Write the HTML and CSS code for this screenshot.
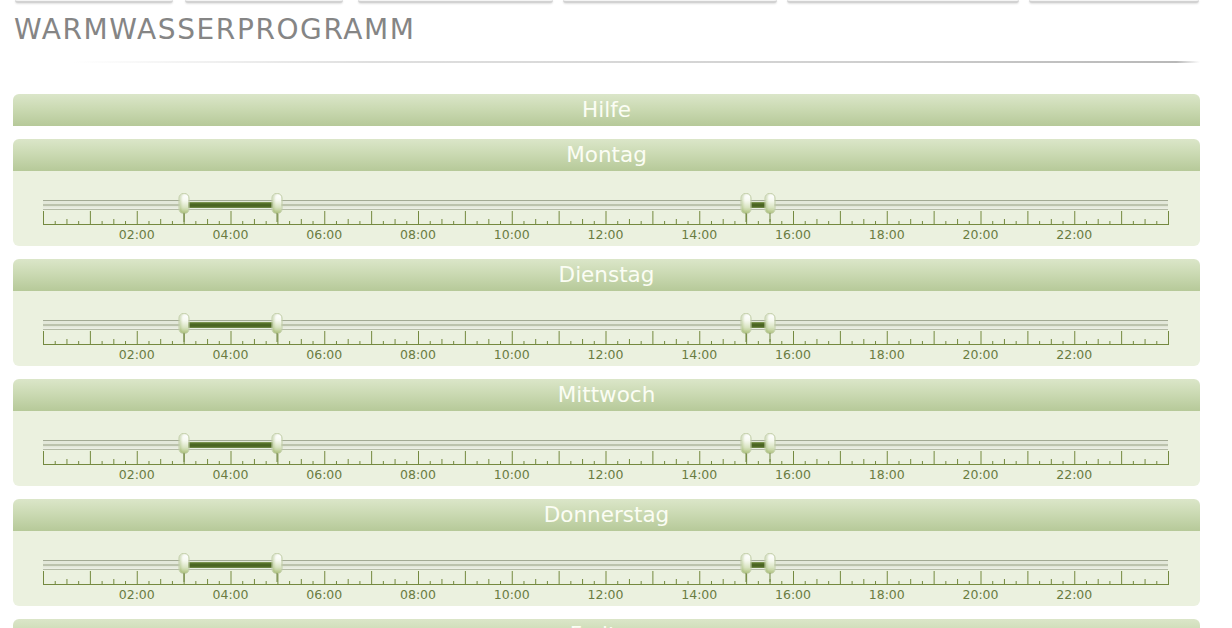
FILE: index.html
```html
<!DOCTYPE html>
<html lang="de">
<head>
<meta charset="utf-8">
<title>Warmwasserprogramm</title>
<link rel="stylesheet" href="styles.css">
</head>
<body>
<svg class="defs" width="0" height="0" aria-hidden="true">
  <symbol id="ruler" viewBox="-0.04267 0 96.0853 14" preserveAspectRatio="none">
    <path vector-effect="non-scaling-stroke" d="M0 13.5H96M0 0v14m1 -4v4m1 -6v6m1 -4v4m1 -14v14m1 -4v4m1 -6v6m1 -4v4m1 -14v14m1 -4v4m1 -6v6m1 -4v4m1 -14v14m1 -4v4m1 -6v6m1 -4v4m1 -14v14m1 -4v4m1 -6v6m1 -4v4m1 -14v14m1 -4v4m1 -6v6m1 -4v4m1 -14v14m1 -4v4m1 -6v6m1 -4v4m1 -14v14m1 -4v4m1 -6v6m1 -4v4m1 -14v14m1 -4v4m1 -6v6m1 -4v4m1 -14v14m1 -4v4m1 -6v6m1 -4v4m1 -14v14m1 -4v4m1 -6v6m1 -4v4m1 -14v14m1 -4v4m1 -6v6m1 -4v4m1 -14v14m1 -4v4m1 -6v6m1 -4v4m1 -14v14m1 -4v4m1 -6v6m1 -4v4m1 -14v14m1 -4v4m1 -6v6m1 -4v4m1 -14v14m1 -4v4m1 -6v6m1 -4v4m1 -14v14m1 -4v4m1 -6v6m1 -4v4m1 -14v14m1 -4v4m1 -6v6m1 -4v4m1 -14v14m1 -4v4m1 -6v6m1 -4v4m1 -14v14m1 -4v4m1 -6v6m1 -4v4m1 -14v14m1 -4v4m1 -6v6m1 -4v4m1 -14v14m1 -4v4m1 -6v6m1 -4v4m1 -14v14m1 -4v4m1 -6v6m1 -4v4m1 -14v14m1 -4v4m1 -6v6m1 -4v4m1 -14v14"/>
  </symbol>
</svg>

<nav class="tabs">
  <span class="tab t1"></span>
  <span class="tab t2"></span>
  <span class="tab t3"></span>
  <span class="tab t4"></span>
  <span class="tab t5"></span>
  <span class="tab t6"></span>
</nav>

<main class="page">
  <h1 class="title">WARMWASSERPROGRAMM</h1>
  <div class="rule"></div>

  <section class="panel collapsed">
    <h2 class="panel-head">Hilfe</h2>
  </section>

  <section class="panel">
    <h2 class="panel-head">Montag</h2>
    <div class="panel-body">
      <div class="slider">
        <div class="range" style="left:140.625px;width:93.75px"></div>
        <div class="range" style="left:703.125px;width:23.44px"></div>
        <span class="handle" style="left:140.625px"></span>
        <span class="handle" style="left:234.375px"></span>
        <span class="handle" style="left:703.125px"></span>
        <span class="handle" style="left:726.56px"></span>
      </div>
      <svg class="ruler"><use href="#ruler" width="100%" height="100%"/></svg>
      <div class="labels"><span>02:00</span><span>04:00</span><span>06:00</span><span>08:00</span><span>10:00</span><span>12:00</span><span>14:00</span><span>16:00</span><span>18:00</span><span>20:00</span><span>22:00</span></div>
    </div>
  </section>

  <section class="panel">
    <h2 class="panel-head">Dienstag</h2>
    <div class="panel-body">
      <div class="slider">
        <div class="range" style="left:140.625px;width:93.75px"></div>
        <div class="range" style="left:703.125px;width:23.44px"></div>
        <span class="handle" style="left:140.625px"></span>
        <span class="handle" style="left:234.375px"></span>
        <span class="handle" style="left:703.125px"></span>
        <span class="handle" style="left:726.56px"></span>
      </div>
      <svg class="ruler"><use href="#ruler" width="100%" height="100%"/></svg>
      <div class="labels"><span>02:00</span><span>04:00</span><span>06:00</span><span>08:00</span><span>10:00</span><span>12:00</span><span>14:00</span><span>16:00</span><span>18:00</span><span>20:00</span><span>22:00</span></div>
    </div>
  </section>

  <section class="panel">
    <h2 class="panel-head">Mittwoch</h2>
    <div class="panel-body">
      <div class="slider">
        <div class="range" style="left:140.625px;width:93.75px"></div>
        <div class="range" style="left:703.125px;width:23.44px"></div>
        <span class="handle" style="left:140.625px"></span>
        <span class="handle" style="left:234.375px"></span>
        <span class="handle" style="left:703.125px"></span>
        <span class="handle" style="left:726.56px"></span>
      </div>
      <svg class="ruler"><use href="#ruler" width="100%" height="100%"/></svg>
      <div class="labels"><span>02:00</span><span>04:00</span><span>06:00</span><span>08:00</span><span>10:00</span><span>12:00</span><span>14:00</span><span>16:00</span><span>18:00</span><span>20:00</span><span>22:00</span></div>
    </div>
  </section>

  <section class="panel">
    <h2 class="panel-head">Donnerstag</h2>
    <div class="panel-body">
      <div class="slider">
        <div class="range" style="left:140.625px;width:93.75px"></div>
        <div class="range" style="left:703.125px;width:23.44px"></div>
        <span class="handle" style="left:140.625px"></span>
        <span class="handle" style="left:234.375px"></span>
        <span class="handle" style="left:703.125px"></span>
        <span class="handle" style="left:726.56px"></span>
      </div>
      <svg class="ruler"><use href="#ruler" width="100%" height="100%"/></svg>
      <div class="labels"><span>02:00</span><span>04:00</span><span>06:00</span><span>08:00</span><span>10:00</span><span>12:00</span><span>14:00</span><span>16:00</span><span>18:00</span><span>20:00</span><span>22:00</span></div>
    </div>
  </section>

  <section class="panel">
    <h2 class="panel-head">Freitag</h2>
    <div class="panel-body">
      <div class="slider">
        <div class="range" style="left:140.625px;width:93.75px"></div>
        <div class="range" style="left:703.125px;width:23.44px"></div>
        <span class="handle" style="left:140.625px"></span>
        <span class="handle" style="left:234.375px"></span>
        <span class="handle" style="left:703.125px"></span>
        <span class="handle" style="left:726.56px"></span>
      </div>
      <svg class="ruler"><use href="#ruler" width="100%" height="100%"/></svg>
      <div class="labels"><span>02:00</span><span>04:00</span><span>06:00</span><span>08:00</span><span>10:00</span><span>12:00</span><span>14:00</span><span>16:00</span><span>18:00</span><span>20:00</span><span>22:00</span></div>
    </div>
  </section>
</main>
</body>
</html>
```

FILE: styles.css
```css
* { box-sizing: border-box; }

html, body {
  margin: 0;
  padding: 0;
  background: #ffffff;
  font-family: "DejaVu Sans", Verdana, sans-serif;
}

.defs {
  position: absolute;
  width: 0;
  height: 0;
  overflow: hidden;
}

/* top tab strip (scrolled mostly out of view) */
.tabs {
  display: flex;
  height: 3px;
  padding-left: 15px;
}
.tab {
  display: block;
  height: 3px;
  background: #f4f4f4;
  border-bottom: 2px solid #d2d2d2;
  border-radius: 0 0 4px 4px;
  box-shadow: 0 1px 2px rgba(0, 0, 0, 0.12);
  flex: none;
}
.t1 { width: 158px; }
.t2 { width: 158px; margin-left: 12px; }
.t3 { width: 195px; margin-left: 15px; }
.t4 { width: 214px; margin-left: 10px; }
.t5 { width: 232px; margin-left: 10px; }
.t6 { width: 170px; margin-left: 10px; }

.page {
  padding: 0 32px 0 13px;
}

.title {
  margin: 12px 0 0 1px;
  font-size: 28px;
  line-height: 30px;
  font-weight: normal;
  letter-spacing: 1.6px;
  color: #858585;
}

.rule {
  height: 2px;
  margin: 16px 0 31px 0;
  background: linear-gradient(to right,
    rgba(200, 200, 200, 0) 5%,
    rgba(215, 215, 215, 0.8) 30%,
    #d0d0d0 70%,
    #b8b8b8 98%,
    rgba(200, 200, 200, 0) 100%);
}

.panel {
  margin-bottom: 13px;
}

.panel-head {
  margin: 0;
  height: 32px;
  line-height: 32px;
  font-size: 21.5px;
  font-weight: normal;
  text-align: center;
  color: #fbfdf4;
  border-radius: 6px 6px 0 0;
  background: linear-gradient(to bottom, #dbe6c9 0%, #cbdab3 45%, #b6c999 100%);
}

.panel-body {
  height: 75px;
  padding: 29px 32px 0 30px;
  background: #ebf1df;
  border-radius: 0 0 6px 6px;
}

.slider {
  position: relative;
  width: 1125px;
  height: 10px;
  border-top: 1px solid #a3aa94;
  border-bottom: 1px solid #b4bba6;
  background: linear-gradient(to bottom,
    #e3e8da 0px, #e3e8da 3px,
    #bcc3ad 3px, #bcc3ad 5px,
    #dfe4d5 5px, #eef1e7 8px);
}

.range {
  position: absolute;
  top: 1px;
  height: 6px;
  background: linear-gradient(to bottom, #93a86a 0px, #5e7a2f 1px, #465f1f 3px, #56702a 5px, #7f9758 6px);
}

.handle {
  position: absolute;
  top: -8px;
  width: 11px;
  height: 21px;
  transform: translateX(-50%);
  border: 1px solid #c0cda6;
  border-radius: 5px;
  background: linear-gradient(to bottom, #ffffff 0%, #f6f9ef 35%, #d9e4c2 70%, #b3c685 100%);
  box-shadow: inset 2px 0 2px rgba(150, 175, 100, 0.35);
}
.handle::after {
  content: "";
  position: absolute;
  left: 4px;
  top: 19px;
  width: 1px;
  height: 9px;
  background: #6f8440;
}

.ruler {
  display: block;
  width: 1126px;
  height: 14px;
  margin-top: 1px;
  stroke: #74893f;
  stroke-width: 1;
  fill: none;
  overflow: visible;
}

.labels {
  display: flex;
  margin-top: 3px;
  padding-left: 46.875px;
  height: 14px;
}
.labels span {
  flex: none;
  width: 93.75px;
  text-align: center;
  font-size: 12.5px;
  line-height: 14px;
  color: #6a7c42;
}
```
